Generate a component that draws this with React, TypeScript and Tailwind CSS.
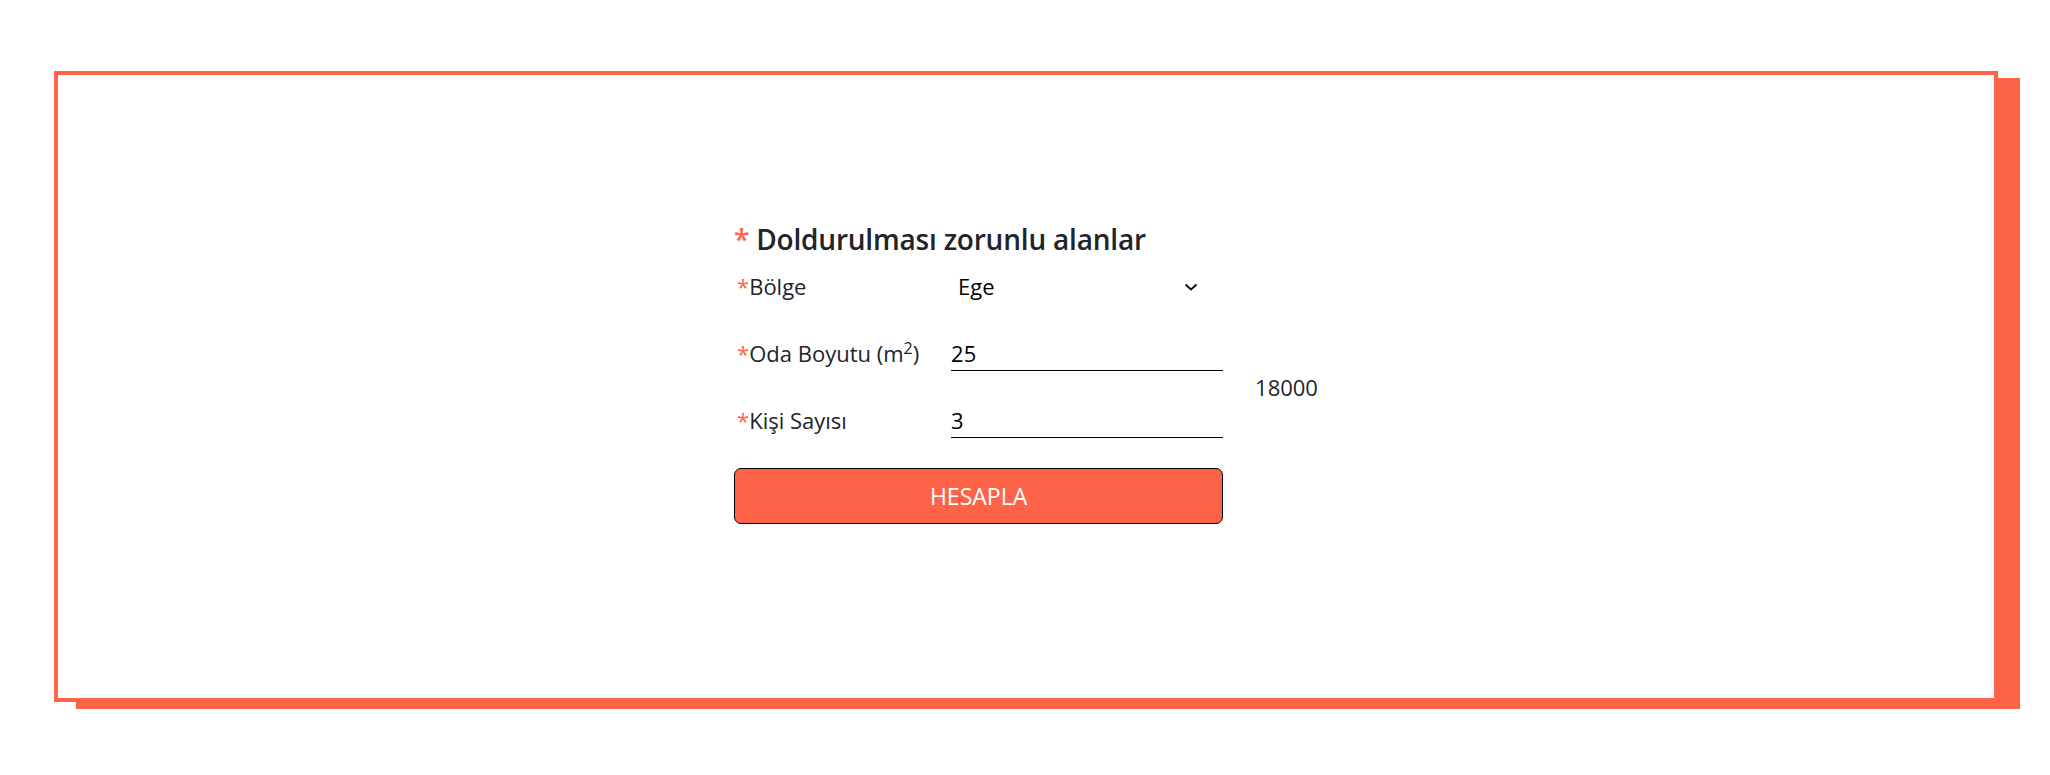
const inputClass =
  'h-[35px] w-full border-b border-black bg-transparent text-[22px] text-black outline-none';

const Star = () => <span className="text-[#ff6347]">*</span>;

export default function App() {
  return (
    <div className="min-h-[775px] bg-white pt-[71px] pl-[54px] pr-[52px] font-['Open_Sans','Noto_Sans',sans-serif] text-[#212529]">
      <div className="flex h-[631px] justify-center border-4 border-[#ff6347] bg-white shadow-[22px_7px_0_0_#ff6347]">
        <form className="pt-[147px]" onSubmit={(e) => e.preventDefault()}>
          <h3 className="text-[28px] font-semibold leading-[34px] tracking-[-0.2px]">
            <Star /> Doldurulması zorunlu alanlar
          </h3>

          <div className="mt-[13px] flex text-[22px]">
            <div className="flex w-[489px] flex-col gap-[32px]">
              <div className="flex h-[35px] items-center">
                <label className="w-[217px] pl-[3px]">
                  <Star />Bölge
                </label>
                <div className="flex h-[35px] flex-1 items-center pl-[7px] pr-[25px] text-black">
                  <span>Ege</span>
                  <svg className="ml-auto" width="14" height="8" viewBox="0 0 14 8" fill="none">
                    <path d="M1.5 1.5 L7 6.5 L12.5 1.5" stroke="#111" strokeWidth="2" />
                  </svg>
                </div>
              </div>

              <div className="flex h-[35px] items-center">
                <label className="w-[217px] pl-[3px]">
                  <Star />Oda Boyutu (m<sup className="text-[16px]">2</sup>)
                </label>
                <div className="flex-1">
                  <input defaultValue="25" className={inputClass} />
                </div>
              </div>

              <div className="flex h-[35px] items-center">
                <label className="w-[217px] pl-[3px]">
                  <Star />Kişi Sayısı
                </label>
                <div className="flex-1">
                  <input defaultValue="3" className={inputClass} />
                </div>
              </div>
            </div>

            <div className="flex items-center pt-[67px] pl-[32px]">18000</div>
          </div>

          <button
            type="submit"
            className="mt-[30px] h-[56px] w-[489px] rounded-[7px] border border-black bg-[#ff6347] text-[23px] text-white"
          >
            HESAPLA
          </button>
        </form>
      </div>
    </div>
  );
}
